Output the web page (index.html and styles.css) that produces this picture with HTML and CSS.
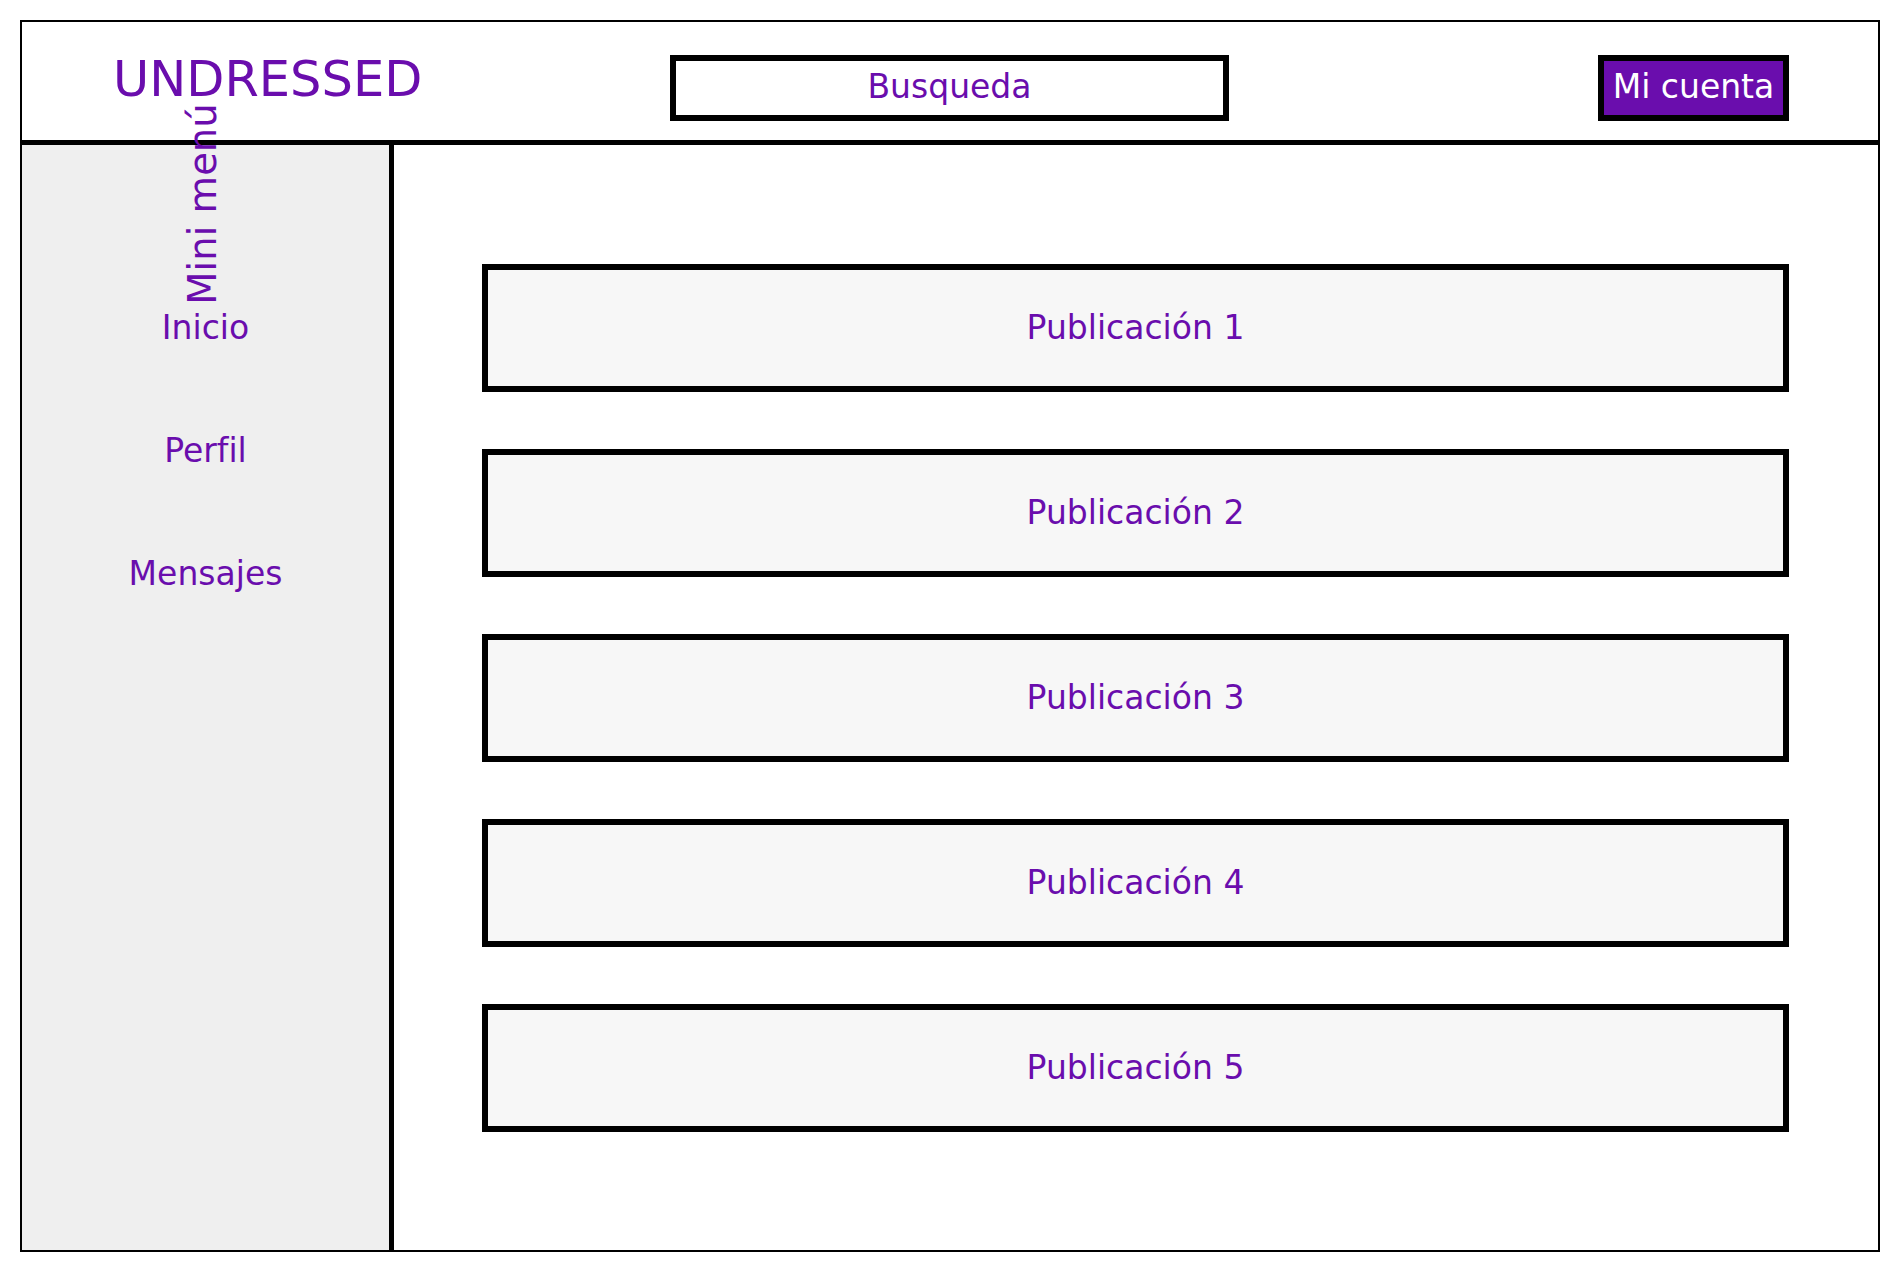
FILE: index.html
```html
<!DOCTYPE html>
<html lang="es">
<head>
  <meta charset="UTF-8">
  <title>Undressed</title>
  <link rel="stylesheet" href="styles.css">
</head>
<body>
  <div class="frame">
    <header class="top-bar">
      <div class="logo">UNDRESSED</div>
      <div class="search">Busqueda</div>
      <div class="account">Mi cuenta</div>
    </header>

    <div class="mini-title">Mini menú</div>

    <div class="layout">
      <nav class="sidebar">
        <div class="nav-item">Inicio</div>
        <div class="nav-item">Perfil</div>
        <div class="nav-item">Mensajes</div>
      </nav>

      <main class="feed">
        <div class="post">Publicación 1</div>
        <div class="post">Publicación 2</div>
        <div class="post">Publicación 3</div>
        <div class="post">Publicación 4</div>
        <div class="post">Publicación 5</div>
      </main>
    </div>
  </div>
</body>
</html>
```

FILE: styles.css
```css
body {
  margin: 0;
  background-color: #fff;
  font-family: 'DejaVu Sans', 'Liberation Sans', sans-serif;
  color: #6a0dad;
}

.frame {
  position: relative;
  box-sizing: border-box;
  margin: 20px;
  width: 1860px;
  height: 1232px;
  border: 2px solid #000;
  display: flex;
  flex-direction: column;
}

.top-bar {
  box-sizing: border-box;
  height: 123px;
  border-bottom: 5px solid #000;
  display: flex;
  align-items: flex-start;
  padding: 33px 89px 0 91px;
}

.logo {
  width: 557px;
  font-size: 49.5px;
  line-height: 1;
  white-space: nowrap;
}

.search,
.account {
  box-sizing: border-box;
  height: 66px;
  border: 6px solid #000;
  padding-bottom: 4px;
  font-size: 33px;
  display: flex;
  align-items: center;
  justify-content: center;
}

.search {
  width: 559px;
  background-color: #fff;
}

.account {
  margin-left: auto;
  width: 191px;
  background-color: #6a0dad;
  color: #fff;
  white-space: nowrap;
}

/* titulo vertical, se monta sobre la linea del header */
.mini-title {
  position: absolute;
  left: 181px;
  top: 182px;
  font-size: 38.5px;
  line-height: 1;
  white-space: nowrap;
  transform: translate(-50%, -50%) rotate(-90deg);
}

.layout {
  flex: 1;
  display: flex;
}

.sidebar {
  width: 367px;
  border-right: 5px solid #000;
  background-color: #efefef;
  display: flex;
  flex-direction: column;
  align-items: center;
  gap: 90px;
  padding-top: 166px;
}

.nav-item {
  font-size: 33px;
  line-height: 33px;
}

.feed {
  flex: 1;
  display: flex;
  flex-direction: column;
  gap: 57px;
  padding: 119px 89px 0 88px;
}

.post {
  box-sizing: border-box;
  height: 128px;
  border: 6px solid #000;
  padding-bottom: 2px;
  background-color: #f7f7f7;
  font-size: 33px;
  display: flex;
  align-items: center;
  justify-content: center;
}
```
